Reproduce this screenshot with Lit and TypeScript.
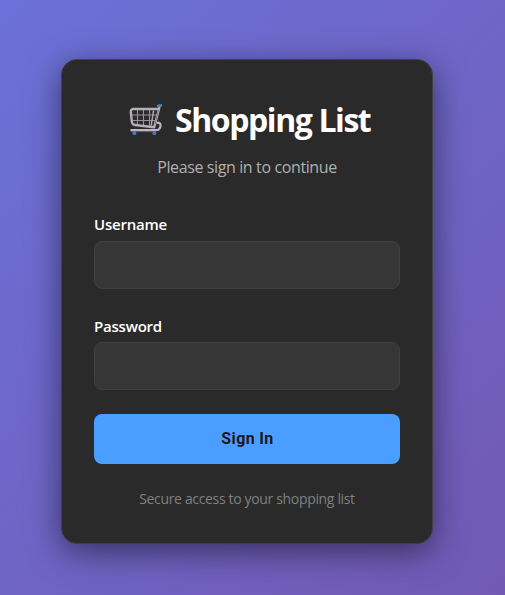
import { LitElement, html, css } from "lit";
import { customElement } from "lit/decorators.js";

@customElement("cart-icon")
class CartIcon extends LitElement {
  static styles = css`
    :host { display: block; width: 34px; height: 34px; }
    svg { display: block; width: 34px; height: 34px; }
  `;
  render() {
    return html`<svg viewBox="0 -1 34 34" fill="none" aria-hidden="true">
      <g stroke="#989299" stroke-width="1.1">
        <path d="M8.5 6v15M14.5 6v15.5M20.5 6v16M3 11h26M3 16.5h25"></path>
      </g>
      <path d="M24.6 6.5L22.2 21.5" stroke="#aaa4ae" stroke-width="1.5"></path>
      <path d="M29 5H4.5C2.6 5 1.7 6.1 1.8 7.8L2.8 17.5C3 19.7 4 20.8 6 21L25.2 23.2L30.6 2.5" stroke="#b5afb8" stroke-width="2.4" stroke-linejoin="round"></path>
      <path d="M26 20.5L29.3 6" stroke="#77717b" stroke-width="1"></path>
      <path d="M27.5 18.6C31 18.4 32.1 20 31.4 22.5C30.8 25.2 29.6 26.2 27 26.2H1.5" stroke="#bdb5c2" stroke-width="2.2"></path>
      <path d="M2 27.6H27" stroke="#655d6e" stroke-width="1"></path>
      <path d="M28 1.9L33 1.2" stroke="#4387d4" stroke-width="2.4"></path>
      <circle cx="5.4" cy="29.2" r="1.9" fill="#407dd1"></circle>
      <circle cx="25.4" cy="29.2" r="1.9" fill="#407dd1"></circle>
    </svg>`;
  }
}

@customElement("app-root")
class AppRoot extends LitElement {
  static styles = css`
    :host {
      display: flex;
      box-sizing: border-box;
      width: 100%;
      height: 100vh;
      padding: 59px 72px 51px 61px;
      overflow: hidden;
      background: linear-gradient(135deg, #6b71d8 0%, #7259b4 100%);
      font-family: "Open Sans", "Noto Sans", sans-serif;
    }
    .card {
      box-sizing: border-box;
      width: 372px;
      height: 485px;
      padding: 36px 32px 32px;
      border: 1px solid #404040;
      border-radius: 16px;
      background: #2a2a2a;
      box-shadow: 0 8px 32px rgba(0, 0, 0, 0.5);
      display: flex;
      flex-direction: column;
    }
    .heading {
      display: flex;
      align-items: center;
      height: 48px;
      padding-left: 35px;
      gap: 12px;
    }
    h1 {
      margin: 0;
      font-size: 32px;
      line-height: 48px;
      font-weight: 700;
      letter-spacing: -1.42px;
      color: #fff;
      white-space: nowrap;
    }
    .subtitle {
      margin: 11px 0 0;
      text-align: center;
      font-size: 16px;
      line-height: 24px;
      letter-spacing: -0.38px;
      color: #b0b0b0;
    }
    form { display: flex; flex-direction: column; margin-top: 33px; }
    label {
      font-size: 15px;
      line-height: 24px;
      font-weight: 600;
      letter-spacing: -0.22px;
      color: #fff;
      margin-bottom: 5px;
    }
    input {
      box-sizing: border-box;
      width: 100%;
      height: 48px;
      margin: 0;
      padding: 0 16px;
      border: 1px solid #404040;
      border-radius: 8px;
      background: #363636;
      color: #fff;
      outline: none;
    }
    .second { margin-top: 25px; margin-bottom: 4px; }
    button {
      height: 50px;
      margin: 24px 0 0;
      padding: 0 0 0 1px;
      border: 0;
      border-radius: 8px;
      background: #4a9eff;
      color: #1a1a1a;
      font: 700 16px/50px Roboto, sans-serif;
      letter-spacing: 0.35px;
    }
    .note {
      margin: 24px 0 0;
      text-align: center;
      font-size: 14px;
      line-height: 22px;
      letter-spacing: -0.34px;
      color: #808080;
    }
  `;
  render() {
    return html`<main class="card">
      <div class="heading"><cart-icon></cart-icon><h1>Shopping List</h1></div>
      <p class="subtitle">Please sign in to continue</p>
      <form>
        <label for="user">Username</label>
        <input id="user" type="text" />
        <label class="second" for="pass">Password</label>
        <input id="pass" type="password" />
        <button type="button">Sign In</button>
      </form>
      <p class="note">Secure access to your shopping list</p>
    </main>`;
  }
}
